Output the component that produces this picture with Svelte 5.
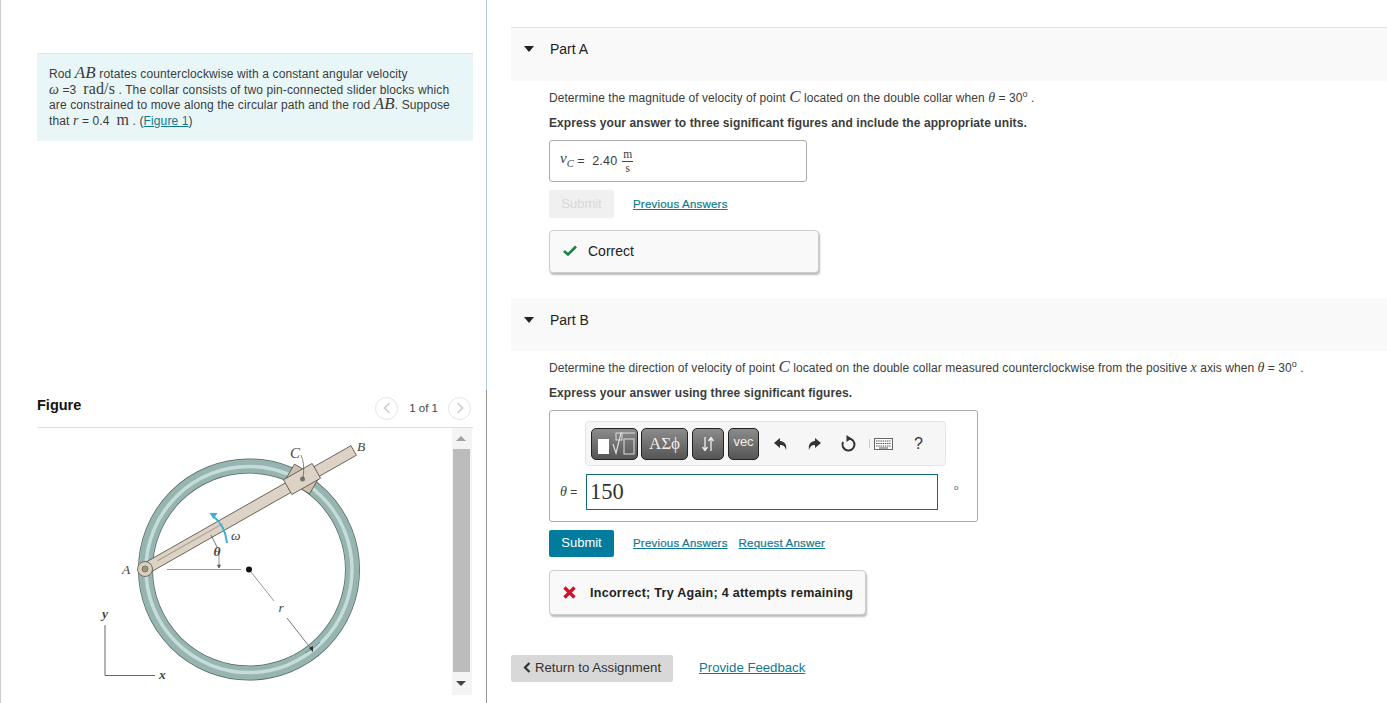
<script>
  let answer = "150";
</script>

<div class="page">
  <section class="left">
    <div class="intro">
      Rod <span class="m big">AB</span> rotates counterclockwise with a constant angular velocity<br />
      <span class="m">ω</span> =3 &nbsp;<span class="r">rad/s</span> . The collar consists of two pin-connected slider blocks which<br />
      are constrained to move along the circular path and the rod <span class="m big">AB</span>. Suppose<br />
      that <span class="m">r</span> = 0.4 &nbsp;<span class="r">m</span> . (<a href="#a">Figure 1</a>)
    </div>

    <div class="fig-head">
      <h3>Figure</h3>
      <div class="pager">
        <span class="round">
          <svg width="8" height="12" viewBox="0 0 8 12"><path d="M6.500 1 1.500 6l5 5" fill="none" stroke="#ccc" stroke-width="1.600" /></svg>
        </span>
        <span class="count">1 of 1</span>
        <span class="round">
          <svg width="8" height="12" viewBox="0 0 8 12"><path d="M1.500 1l5 5-5 5" fill="none" stroke="#ccc" stroke-width="1.600" /></svg>
        </span>
      </div>
    </div>

    <div class="fig-body">
      <svg class="diagram" width="416" height="267" viewBox="37 428 416 267">
        <circle cx="249" cy="569.500" r="103.500" fill="none" stroke="#55655f" stroke-width="15" />
        <circle cx="249" cy="569.500" r="103.500" fill="none" stroke="#97b5b0" stroke-width="13.600" />
        <circle cx="249" cy="569.500" r="103" fill="none" stroke="#c6dcd8" stroke-width="3.500" />
        <path d="M305 653q9-4 15-11" fill="none" stroke="#6f8682" stroke-width="1" />

        <line x1="167" y1="569.500" x2="241" y2="569.500" stroke="#999" stroke-width="1" />
        <line x1="251" y1="572" x2="274" y2="601" stroke="#999" stroke-width="1" />
        <line x1="287" y1="618" x2="312" y2="650" stroke="#777" stroke-width="1" />
        <path d="M309 648l4 4 0-6z" fill="#333" />
        <circle cx="249" cy="569.500" r="3" fill="#111" />

        <rect x="288" y="470" width="28" height="18" fill="#cfc1b1" stroke="#5c5347" stroke-width="0.800" transform="rotate(30.500 302 479)" />
        <g transform="rotate(-29.600 145 569)">
          <rect x="145" y="563.500" width="240" height="11" fill="#dcd2c6" stroke="#5c5347" stroke-width="0.800" />
          <line x1="160" y1="568" x2="235" y2="568" stroke="#a89c8c" stroke-width="1" />
        </g>
        <rect x="285.500" y="470.500" width="33" height="17" fill="#dcd2c6" stroke="#5c5347" stroke-width="0.800" transform="rotate(-29.600 302 479)" />
        <circle cx="302.500" cy="479" r="2.500" fill="#77776f" />
        <path d="M301 455q4 8 2 24" fill="none" stroke="#555" stroke-width="0.700" />

        <circle cx="145" cy="569" r="7.500" fill="#d9cebf" stroke="#5c5347" stroke-width="0.800" />
        <circle cx="145" cy="569" r="3" fill="#9a958a" stroke="#5c5347" stroke-width="0.600" />

        <path d="M227 543q-2-18-14-27" fill="none" stroke="#3bb0cf" stroke-width="2" />
        <path d="M209.500 513l8 0-4 6z" fill="#3bb0cf" />
        <path d="M211 535l6 12" stroke="#555" stroke-width="0.800" fill="none" />
        <path d="M219 552v16M217.500 565h3l-1.500 3z" stroke="#666" stroke-width="0.700" fill="#444" />

        <line x1="105" y1="625" x2="105" y2="675.500" stroke="#666" stroke-width="1" />
        <line x1="105" y1="675.500" x2="155" y2="675.500" stroke="#666" stroke-width="1" />

        <text x="122" y="574" class="lbl">A</text>
        <text x="357" y="450.500" class="lbl">B</text>
        <text x="290" y="458" class="lbl big">C</text>
        <text x="231" y="540" class="lbl">ω</text>
        <text x="213.500" y="556" class="lbl b">θ</text>
        <text x="278.500" y="612" class="lbl">r</text>
        <text x="102" y="618" class="lbl b">y</text>
        <text x="159" y="679" class="lbl b">x</text>
      </svg>
      <div class="scroll">
        <span class="arrow up"></span>
        <div class="thumb"></div>
        <span class="arrow down"></span>
      </div>
    </div>
  </section>

  <main class="right">
    <div class="part-head first"><span class="tri"></span><span>Part A</span></div>
    <div class="part-body">
      <p class="q">Determine the magnitude of velocity of point <span class="m big">C</span> located on the double collar when <span class="m">θ</span> = 30<sup>o</sup> .</p>
      <p class="hint">Express your answer to three significant figures and include the appropriate units.</p>
      <div class="answer">
        <span class="m vc">v<sub>C</sub></span><span class="val">&nbsp;= &nbsp;2.40</span>
        <span class="frac"><span class="r">m</span><span class="r">s</span></span>
      </div>
      <div class="actions">
        <button class="submit off">Submit</button>
        <a href="#a">Previous Answers</a>
      </div>
      <div class="feedback ok">
        <svg width="14" height="11" viewBox="0 0 14 11"><path d="M1 6l4 3.500L13 1.500" fill="none" stroke="#1c8246" stroke-width="2.600" /></svg>
        <span>Correct</span>
      </div>
    </div>

    <div class="part-head second"><span class="tri"></span><span>Part B</span></div>
    <div class="part-body">
      <p class="q">Determine the direction of velocity of point <span class="m big">C</span> located on the double collar measured counterclockwise from the positive <span class="m">x</span> axis when <span class="m">θ</span> = 30<sup>o</sup> .</p>
      <p class="hint">Express your answer using three significant figures.</p>
      <div class="editor">
        <div class="toolbar">
          <button class="tool t1" aria-label="templates">
            <svg width="44" height="30" viewBox="0 0 44 30">
              <rect x="5" y="10" width="11" height="15" fill="#fff" />
              <rect x="23" y="4" width="6" height="7" fill="none" stroke="#ddd" />
              <path d="M20 15l3 9 5-20h14" fill="none" stroke="#ddd" stroke-width="1.200" />
              <rect x="31" y="10" width="10" height="15" fill="none" stroke="#ddd" />
            </svg>
          </button>
          <button class="tool t2">ΑΣϕ</button>
          <button class="tool t3" aria-label="arrows">
            <svg width="14" height="16" viewBox="0 0 14 16"><path d="M4 1v13M1.500 11 4 14.500 6.500 11M10 15V2M7.500 5 10 1.500 12.500 5" fill="none" stroke="#eee" stroke-width="1.300" /></svg>
          </button>
          <button class="tool t4">vec</button>
          <span class="icons">
            <svg class="i1" width="15" height="14" viewBox="0 0 15 14"><path d="M7 1 1 6l6 5V8c3 0 5 1 6 5 1-5-1-8.500-6-9z" fill="#333" /></svg>
            <svg class="i2" width="15" height="14" viewBox="0 0 15 14"><path d="M8 1l6 5-6 5V8c-3 0-5 1-6 5-1-5 1-8.500 6-9z" fill="#333" /></svg>
            <svg class="i3" width="16" height="18" viewBox="0 0 16 18"><path d="M8.500 3.500a6 6 0 1 1-5.500 3.500" fill="none" stroke="#333" stroke-width="2" /><path d="M6.500 0l5 3.500-5 3.500z" fill="#333" /></svg>
            <span class="sep"></span>
            <svg class="i4" width="19" height="12" viewBox="0 0 19 12"><rect x="0.500" y="0.500" width="18" height="11" fill="#fff" stroke="#666" /><path d="M2 3h15M2 5.500h15M2 8h15" stroke="#555" stroke-dasharray="1.500 .7" /><path d="M5 10h9" stroke="#555" /></svg>
            <span class="help">?</span>
          </span>
        </div>
        <div class="entry">
          <span class="label"><span class="m">θ</span> =</span>
          <input bind:value={answer} />
          <span class="deg">o</span>
        </div>
      </div>
      <div class="actions second-actions">
        <button class="submit">Submit</button>
        <a href="#a">Previous Answers</a>
        <a href="#a" class="req">Request Answer</a>
      </div>
      <div class="feedback bad">
        <svg width="13" height="13" viewBox="0 0 13 13"><path d="M1.500 1.500l10 10M11.500 1.500l-10 10" stroke="#d0142c" stroke-width="3.400" /></svg>
        <span>Incorrect; Try Again; 4 attempts remaining</span>
      </div>
    </div>

    <div class="foot">
      <button class="back">
        <svg width="8" height="11" viewBox="0 0 8 11"><path d="M6.500 1 2 5.500 6.500 10" fill="none" stroke="#333" stroke-width="2.200" /></svg>
        Return to Assignment
      </button>
      <a href="#a">Provide Feedback</a>
    </div>
  </main>
</div>

<style>
  :global(body) {
    margin: 0;
    background: #fff;
    overflow: hidden;
  }

  .page {
    display: flex;
    width: 1387px;
    height: 703px;
    overflow: hidden;
    font-family: "Liberation Sans", Arial, sans-serif;
    font-size: 12px;
    color: #3c3c3c;
  }

  a {
    color: #0f7a8f;
    text-decoration: underline;
  }

  .m {
    font-family: "Liberation Serif", serif;
    font-style: italic;
    font-size: 14px;
    line-height: 0;
  }

  .big {
    font-size: 17px;
  }

  .r {
    font-family: "Liberation Serif", serif;
    font-size: 16px;
    line-height: 0;
  }

  /* left column */
  .left {
    box-sizing: border-box;
    width: 487px;
    height: 703px;
    flex: none;
    padding: 53px 14px 0 36px;
    border-left: 1px solid #ccc;
    background: linear-gradient(to bottom, #b4cfdb 390px, #999 390px) right top / 1px 100% no-repeat;
  }

  .intro {
    box-sizing: border-box;
    height: 88px;
    padding: 13px 12px 0;
    line-height: 15.600px;
    letter-spacing: 0.120px;
    white-space: nowrap;
    background: #e8f6f8;
    border-top: 1px solid #d9e8ea;
  }

  .fig-head {
    display: flex;
    justify-content: space-between;
    align-items: center;
    height: 36px;
    margin-top: 250px;
    border-bottom: 1px solid #ddd;
  }

  .fig-head h3 {
    margin: 0 0 8px;
    font-size: 14.500px;
    font-weight: bold;
    color: #111;
  }

  .pager {
    display: flex;
    align-items: center;
    gap: 10px;
    margin: 0 2px 2px 0;
  }

  .round {
    display: flex;
    align-items: center;
    justify-content: center;
    box-sizing: border-box;
    width: 23px;
    height: 23px;
    border: 1px solid #e4e4e4;
    border-radius: 50%;
  }

  .count {
    margin-left: 1px;
    font-size: 11.500px;
    color: #444;
  }

  .fig-body {
    display: flex;
    height: 268px;
  }

  .diagram {
    display: block;
    flex: none;
  }

  .lbl {
    font-family: "Liberation Serif", serif;
    font-style: italic;
    font-size: 13.500px;
    fill: #444;
  }

  .lbl.big {
    font-size: 15px;
  }

  .lbl.b {
    font-weight: bold;
  }

  .scroll {
    display: flex;
    flex-direction: column;
    align-items: center;
    width: 20px;
    height: 267px;
    margin-left: -1px;
    background: #f4f4f4;
  }

  .thumb {
    width: 17px;
    height: 223px;
    margin-right: 2px;
    background: #bcbcbc;
  }

  .arrow {
    display: block;
    width: 0;
    height: 0;
    border-left: 5px solid transparent;
    border-right: 5px solid transparent;
  }

  .arrow.up {
    margin: 8px 2px 8px 0;
    border-bottom: 5px solid #a0a0a0;
  }

  .arrow.down {
    margin: 9px 2px 0 0;
    border-top: 5px solid #444;
  }

  /* right column */
  .right {
    width: 876px;
    flex: none;
    margin-left: 24px;
    padding-top: 27px;
  }

  .part-head {
    box-sizing: border-box;
    display: flex;
    height: 54px;
    padding: 13px 0 0 13px;
    gap: 16px;
    font-size: 14px;
    line-height: 16px;
    background: #f9f9f9;
    color: #222;
  }

  .part-head.first {
    border-top: 1px solid #e4e4e4;
  }

  .part-head.second {
    height: 53px;
    margin-top: 25px;
    padding-top: 14px;
  }

  .tri {
    width: 0;
    height: 0;
    margin-top: 5px;
    border-left: 5.500px solid transparent;
    border-right: 5.500px solid transparent;
    border-top: 6px solid #222;
  }

  .part-body {
    padding-left: 38px;
  }

  .q {
    margin: 0;
    height: 18px;
    padding-top: 8px;
    line-height: 18px;
    letter-spacing: 0.060px;
    white-space: nowrap;
  }

  .q sup {
    font-size: 9px;
    line-height: 0;
  }

  .hint {
    margin: 8px 0 0;
    height: 16px;
    line-height: 16px;
    font-weight: bold;
    letter-spacing: 0.085px;
    white-space: nowrap;
  }

  .answer {
    box-sizing: border-box;
    display: flex;
    align-items: center;
    width: 258px;
    height: 42px;
    margin-top: 9px;
    padding-left: 10px;
    border: 1px solid #aaa;
    border-radius: 3px;
    white-space: pre;
  }

  .vc {
    font-size: 15px;
  }

  .vc sub {
    font-size: 10.500px;
    line-height: 0;
  }

  .val {
    font-size: 12.500px;
    letter-spacing: 0.200px;
  }

  .frac {
    display: inline-flex;
    flex-direction: column;
    align-items: center;
    margin-left: 5px;
  }

  .frac .r {
    padding: 0 1px;
    font-size: 11.500px;
    line-height: 13px;
  }

  .frac .r:first-child {
    border-bottom: 1px solid #444;
  }

  .actions {
    display: flex;
    align-items: center;
    gap: 19px;
    height: 28px;
    margin-top: 8px;
    font-size: 11.500px;
    letter-spacing: 0.200px;
  }

  .actions a {
    -webkit-text-stroke: 0.200px #0f7a8f;
  }

  .submit {
    box-sizing: border-box;
    width: 65px;
    height: 28px;
    padding: 0 0 2px;
    border: 0;
    border-radius: 2px;
    font-family: inherit;
    font-size: 13px;
    color: #fff;
    background: #007c9e;
  }

  .submit.off {
    color: #d8d8d8;
    background: #f0f0f0;
  }

  .feedback {
    box-sizing: border-box;
    display: flex;
    align-items: center;
    margin-top: 12px;
    border: 1px solid #ccc;
    border-radius: 4px;
    background: #f9f9f9;
    box-shadow: 1px 2px 2px #bbb;
    font-size: 14px;
    color: #222;
  }

  .ok {
    width: 270px;
    height: 43px;
    padding: 0 0 2px 13px;
    gap: 11px;
  }

  .bad {
    width: 317px;
    height: 45px;
    margin-top: 13px;
    padding-left: 13px;
    gap: 14px;
    font-size: 12.500px;
    font-weight: bold;
    letter-spacing: 0.290px;
  }

  .editor {
    box-sizing: border-box;
    width: 429px;
    height: 112px;
    margin-top: 9px;
    padding: 10px 0 0 35px;
    border: 1px solid #aaa;
    border-radius: 3px;
  }

  .toolbar {
    box-sizing: border-box;
    display: flex;
    align-items: center;
    width: 361px;
    height: 45px;
    padding-left: 5px;
    border: 1px solid #e4e4e4;
    border-radius: 4px;
    background: #f6f6f6;
  }

  .tool {
    box-sizing: border-box;
    display: flex;
    align-items: center;
    justify-content: center;
    height: 32px;
    padding: 0;
    margin-right: 3px;
    color: #eee;
    border: 1px solid #222;
    border-radius: 5px;
    background: linear-gradient(#8c8c8c, #555);
  }

  .t1 {
    width: 47px;
  }

  .t2 {
    width: 47px;
    margin-right: 4px;
    font-family: "Liberation Serif", serif;
    font-size: 17px;
  }

  .t3 {
    width: 32px;
    margin-right: 4px;
  }

  .t4 {
    width: 31px;
    align-items: flex-start;
    padding-top: 5px;
    font-family: "Liberation Sans", sans-serif;
    font-size: 13px;
  }

  .icons {
    display: flex;
    align-items: center;
    margin-left: 11px;
  }

  .i2 {
    margin-left: 19px;
  }

  .i3 {
    margin-left: 18px;
  }

  .sep {
    width: 1px;
    height: 9px;
    margin: 0 4px 0 13px;
    background: #ccc;
  }

  .help {
    margin-left: 21px;
    font-size: 16px;
    color: #333;
  }

  .entry {
    display: flex;
    align-items: center;
    margin-top: 8px;
    margin-left: -25px;
  }

  .label {
    width: 26px;
    font-size: 12px;
    white-space: nowrap;
  }

  input {
    box-sizing: border-box;
    width: 352px;
    height: 36px;
    padding: 0 3px;
    border: 1px solid #0f6a7a;
    outline: 0;
    font-family: "Liberation Serif", serif;
    font-size: 22.500px;
    color: #333;
  }

  .deg {
    margin: 0 0 10px 16px;
    font-size: 8px;
    color: #555;
  }

  .second-actions {
    height: 27px;
    margin-top: 8px;
  }

  .second-actions .submit {
    height: 27px;
  }

  .second-actions a {
    margin-bottom: 2px;
  }

  .req {
    margin-left: -8px;
  }

  .foot {
    display: flex;
    align-items: center;
    gap: 26px;
    margin-top: 40px;
    font-size: 13.200px;
  }

  .foot a {
    margin-bottom: 2px;
  }

  .back {
    display: flex;
    align-items: center;
    gap: 4px;
    box-sizing: border-box;
    width: 162px;
    height: 27px;
    padding: 0 0 2px 12px;
    border: 0;
    border-radius: 2px;
    font-family: inherit;
    font-size: 13.200px;
    color: #333;
    background: #d8d8d8;
  }
</style>
